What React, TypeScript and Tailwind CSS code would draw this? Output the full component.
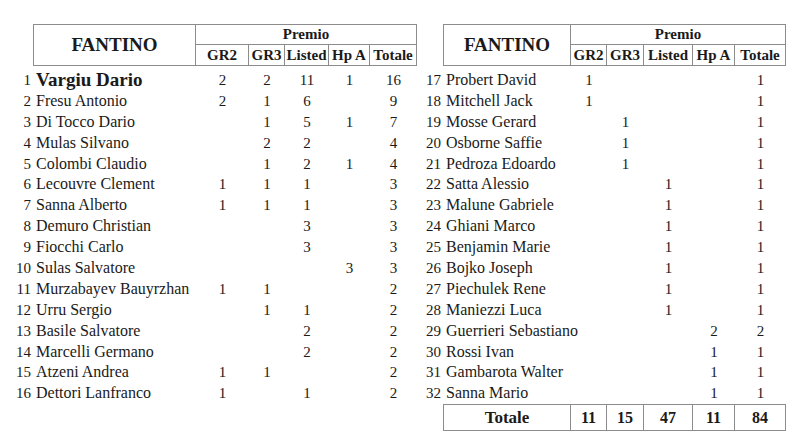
type Row = {
  n: number;
  name: string;
  v: (number | null)[]; // GR2, GR3, Listed, Hp A, Totale
  bold?: boolean;
};

const LEFT: Row[] = [
  { n: 1, name: "Vargiu Dario", v: [2, 2, 11, 1, 16], bold: true },
  { n: 2, name: "Fresu Antonio", v: [2, 1, 6, null, 9] },
  { n: 3, name: "Di Tocco Dario", v: [null, 1, 5, 1, 7] },
  { n: 4, name: "Mulas Silvano", v: [null, 2, 2, null, 4] },
  { n: 5, name: "Colombi Claudio", v: [null, 1, 2, 1, 4] },
  { n: 6, name: "Lecouvre Clement", v: [1, 1, 1, null, 3] },
  { n: 7, name: "Sanna Alberto", v: [1, 1, 1, null, 3] },
  { n: 8, name: "Demuro Christian", v: [null, null, 3, null, 3] },
  { n: 9, name: "Fiocchi Carlo", v: [null, null, 3, null, 3] },
  { n: 10, name: "Sulas Salvatore", v: [null, null, null, 3, 3] },
  { n: 11, name: "Murzabayev Bauyrzhan", v: [1, 1, null, null, 2] },
  { n: 12, name: "Urru Sergio", v: [null, 1, 1, null, 2] },
  { n: 13, name: "Basile Salvatore", v: [null, null, 2, null, 2] },
  { n: 14, name: "Marcelli Germano", v: [null, null, 2, null, 2] },
  { n: 15, name: "Atzeni Andrea", v: [1, 1, null, null, 2] },
  { n: 16, name: "Dettori Lanfranco", v: [1, null, 1, null, 2] },
];

const RIGHT: Row[] = [
  { n: 17, name: "Probert David", v: [1, null, null, null, 1] },
  { n: 18, name: "Mitchell Jack", v: [1, null, null, null, 1] },
  { n: 19, name: "Mosse Gerard", v: [null, 1, null, null, 1] },
  { n: 20, name: "Osborne Saffie", v: [null, 1, null, null, 1] },
  { n: 21, name: "Pedroza Edoardo", v: [null, 1, null, null, 1] },
  { n: 22, name: "Satta Alessio", v: [null, null, 1, null, 1] },
  { n: 23, name: "Malune Gabriele", v: [null, null, 1, null, 1] },
  { n: 24, name: "Ghiani Marco", v: [null, null, 1, null, 1] },
  { n: 25, name: "Benjamin Marie", v: [null, null, 1, null, 1] },
  { n: 26, name: "Bojko Joseph", v: [null, null, 1, null, 1] },
  { n: 27, name: "Piechulek Rene", v: [null, null, 1, null, 1] },
  { n: 28, name: "Maniezzi Luca", v: [null, null, 1, null, 1] },
  { n: 29, name: "Guerrieri Sebastiano", v: [null, null, null, 2, 2] },
  { n: 30, name: "Rossi Ivan", v: [null, null, null, 1, 1] },
  { n: 31, name: "Gambarota Walter", v: [null, null, null, 1, 1] },
  { n: 32, name: "Sanna Mario", v: [null, null, null, 1, 1] },
];

const PRIZES = ["GR2", "GR3", "Listed", "Hp A", "Totale"];

const LINE = "border-[#8c8c8c]";

/** Box header: FANTINO spans two rows, Premio over the five prize columns. */
function Header({ cols }: { cols: string }) {
  return (
    <div className={`ml-[19px] border ${LINE}`}>
      <div className={`grid ${cols} grid-rows-[20px_20px]`}>
        <div className={`row-span-2 flex items-center justify-center border-r ${LINE} text-[19px] font-bold`}>
          FANTINO
        </div>
        <div className={`col-span-5 flex items-center justify-center border-b ${LINE} text-[15px] font-bold`}>
          Premio
        </div>
        {PRIZES.map((p, i) => (
          <div
            key={p}
            className={`flex items-center justify-center whitespace-nowrap text-[15px] font-bold ${i < 4 ? `border-r ${LINE}` : ""}`}
          >
            {p}
          </div>
        ))}
      </div>
    </div>
  );
}

function Body({ rows, cols }: { rows: Row[]; cols: string }) {
  return (
    <div className="mt-[4px]">
      {rows.map((r) => (
        <div key={r.n} className={`grid ${cols} h-[20.9px] items-center leading-[20.9px]`}>
          <span className="pr-[2px] text-right text-[15px]">{r.n}</span>
          <span className={`whitespace-nowrap pl-[3px] ${r.bold ? "text-[19px] font-bold" : "text-[16px]"}`}>
            {r.name}
          </span>
          {r.v.map((x, i) => (
            <span key={i} className="text-center text-[15px]">
              {x ?? ""}
            </span>
          ))}
        </div>
      ))}
    </div>
  );
}

export default function App() {
  const leftHead = "grid-cols-[162px_53px_36px_44px_41px_46px]";
  const leftBody = "grid-cols-[19px_163px_53px_36px_44px_41px_47px]";
  const rightHead = "grid-cols-[127px_36px_37px_49px_42px_50px]";
  const rightBody = "grid-cols-[19px_128px_36px_37px_49px_42px_51px]";

  return (
    <div className="flex h-[440px] w-[800px] gap-[7px] bg-white pl-[14px] pt-[24px] font-['Liberation_Serif','DejaVu_Serif',serif] text-[#1a1a1a]">
      <div className="w-[403px]">
        <Header cols={leftHead} />
        <Body rows={LEFT} cols={leftBody} />
      </div>

      <div className="w-[362px]">
        <Header cols={rightHead} />
        <Body rows={RIGHT} cols={rightBody} />

        {/* Totale footer */}
        <div className={`ml-[19px] border ${LINE}`}>
          <div className={`grid ${rightHead} h-[25px] items-center text-[16px] font-bold`}>
            <div className={`flex h-full items-center justify-center border-r ${LINE} text-[17px]`}>Totale</div>
            {[11, 15, 47, 11, 84].map((t, i) => (
              <div
                key={i}
                className={`flex h-full items-center justify-center ${i < 4 ? `border-r ${LINE}` : ""}`}
              >
                {t}
              </div>
            ))}
          </div>
        </div>
      </div>
    </div>
  );
}
